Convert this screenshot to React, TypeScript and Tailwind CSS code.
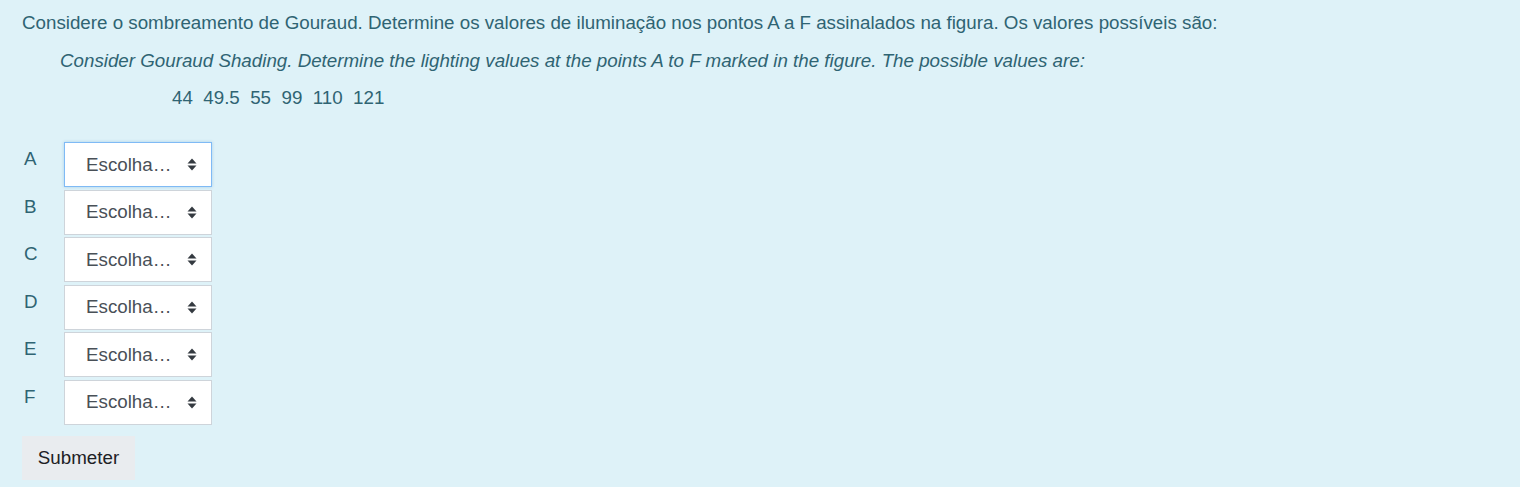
const rows = ["A", "B", "C", "D", "E", "F"];

function Arrows() {
    return (
        <svg width="10" height="13" viewBox="0 0 10 13" className="shrink-0">
            <path d="M5 0.5 L9.5 5.5 L0.5 5.5 Z" fill="#343a40" />
            <path d="M5 12.5 L9.5 7.5 L0.5 7.5 Z" fill="#343a40" />
        </svg>
    );
}

function ChoiceRow({ label, focused }: { label: string; focused?: boolean }) {
    return (
        <div className="flex flex-row items-start">
            <span className="w-[42px] pl-[2px] pt-[3px] text-[#2f6473]">{label}</span>
            <div
                className={
                    focused
                        ? "flex h-[45px] w-[148px] flex-row items-center justify-between border border-[#7fbaf5] bg-white pl-[21px] pr-[14px] shadow-[0_0_3px_rgba(15,108,191,0.25)]"
                        : "flex h-[45px] w-[148px] flex-row items-center justify-between border border-[#ced4da] bg-white pl-[21px] pr-[14px]"
                }
            >
                <span className="text-[#495057]">Escolha…</span>
                <Arrows />
            </div>
        </div>
    );
}

export default function App() {
    return (
        <div
            className="min-h-[487px] bg-[#def2f8] px-[22px] pt-[9px] text-[18.75px] leading-[28px] text-[#2f6473]"
            style={{ fontFamily: '"Liberation Sans", Arial, sans-serif' }}
        >
            <p className="mb-[9.5px]">
                Considere o sombreamento de Gouraud. Determine os valores de iluminação nos pontos A a F assinalados na figura. Os valores possíveis são:
            </p>
            <p className="mb-[9.5px] pl-[38px] italic">
                Consider Gouraud Shading. Determine the lighting values at the points A to F marked in the figure. The possible values are:
            </p>
            <p className="pl-[150px] whitespace-pre">44  49.5  55  99  110  121</p>

            <div className="mt-[30px] flex flex-col gap-[2.5px]">
                {rows.map((r, i) => (
                    <ChoiceRow key={r} label={r} focused={i === 0} />
                ))}
            </div>

            <button className="mt-[11px] h-[44px] w-[113px] bg-[#e9ecef] text-[#1d2125]">Submeter</button>
        </div>
    );
}
